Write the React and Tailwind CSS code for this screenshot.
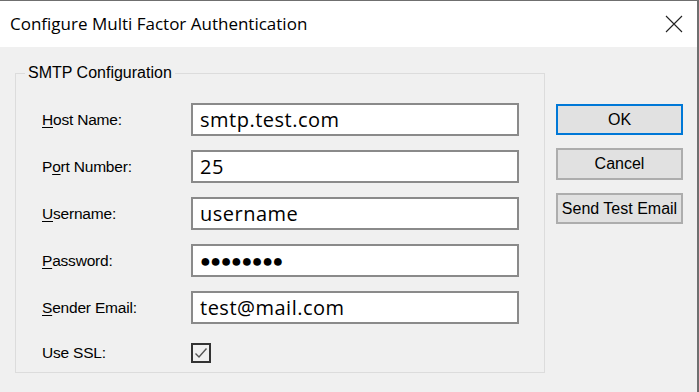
import { useState } from 'react';

const fields = [
  { key: 'H', rest: 'ost Name:', value: 'smtp.test.com' },
  { pre: 'P', key: 'o', rest: 'rt Number:', value: '25' },
  { key: 'U', rest: 'sername:', value: 'username' },
  { key: 'P', rest: 'assword:', value: '●●●●●●●●', secret: true },
  { key: 'S', rest: 'ender Email:', value: 'test@mail.com' },
];

export default function App() {
  const [useSsl, setUseSsl] = useState(true);

  return (
    <div className="w-[699px] h-[392px] overflow-hidden bg-[#f0f0f0] border-t border-r-2 border-[#6f6f6f] flex flex-col font-['Liberation_Sans',Arial,sans-serif] text-[16px] text-black">
      {/* Title bar */}
      <div className="h-[46px] shrink-0 bg-white flex items-center justify-between pl-[10px] pr-[14px]">
        <span className="font-['Open_Sans',sans-serif] text-[17px] text-black">
          Configure Multi Factor Authentication
        </span>
        <svg width="18" height="18" viewBox="0 0 18 18" className="text-[#222]">
          <path d="M1 1 L17 17 M17 1 L1 17" stroke="currentColor" strokeWidth="1.1" />
        </svg>
      </div>

      {/* Body */}
      <div className="flex items-start">
        <fieldset className="ml-[15px] mt-[17px] w-[530px] border border-[#dcdcdc] px-0 pb-[5px]">
          <legend className="ml-[9px] px-[3px] leading-[18px]">SMTP Configuration</legend>
          <div className="pl-[26px] pt-[21px] flex flex-col gap-[14px] text-[15.5px] tracking-[-0.2px]">
            {fields.map((f) => (
              <div key={f.rest} className="flex items-center h-[33px]">
                <label className="w-[149px] shrink-0">
                  {f.pre}
                  <span className="underline underline-offset-[2px]">{f.key}</span>
                  {f.rest}
                </label>
                <div className="w-[328px] h-[33px] bg-white border-2 border-[#8a8a8a] flex items-center pl-[7px]">
                  {f.secret ? (
                    <span className="text-[18px] tracking-[-0.5px] leading-none">{f.value}</span>
                  ) : (
                    <span className="font-['Open_Sans',sans-serif] text-[20px] tracking-[0.5px] leading-none">
                      {f.value}
                    </span>
                  )}
                </div>
              </div>
            ))}
            <div className="flex items-center h-[29px]">
              <span className="w-[149px] shrink-0">Use SSL:</span>
              <button
                onClick={() => setUseSsl(!useSsl)}
                className="w-[20px] h-[20px] border-2 border-[#333] bg-[#f0f0f0] flex items-center justify-center"
              >
                {useSsl && (
                  <svg width="14" height="14" viewBox="0 0 14 14">
                    <path d="M1.5 7.5 L5 11 L12.5 2.5" fill="none" stroke="#555" strokeWidth="1.4" />
                  </svg>
                )}
              </button>
            </div>
          </div>
        </fieldset>

        {/* Buttons */}
        <div className="ml-[11px] mt-[57px] flex flex-col gap-[13px] w-[127px]">
          <button className="h-[31px] bg-[#e1e1e1] border-2 border-[#0078d7]">OK</button>
          <button className="h-[32px] bg-[#e1e1e1] border-2 border-[#adadad]">Cancel</button>
          <button className="h-[31px] bg-[#e1e1e1] border-2 border-[#adadad]">Send Test Email</button>
        </div>
      </div>
    </div>
  );
}
